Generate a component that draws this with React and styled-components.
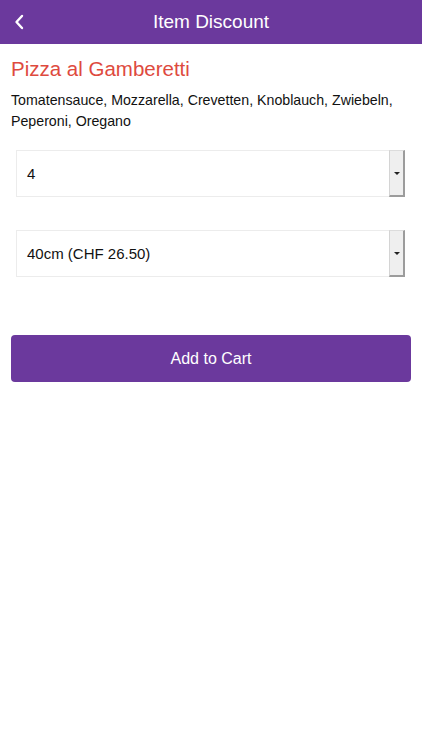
import styled, { createGlobalStyle } from "styled-components";

const GlobalStyle = createGlobalStyle`
  html, body {
    margin: 0;
    padding: 0;
    background: #ffffff;
    font-family: "Liberation Sans", Arial, sans-serif;
  }
`;

const PURPLE = "#6b399d";

const Page = styled.div`
  width: 422px;
  min-height: 750px;
  background: #ffffff;
`;

const TopBar = styled.header`
  height: 44px;
  background: ${PURPLE};
  display: flex;
  align-items: center;
  justify-content: center;
  position: relative;
`;

const BackButton = styled.button`
  position: absolute;
  left: 12px;
  top: 13px;
  width: 14px;
  height: 18px;
  padding: 0;
  border: 0;
  background: transparent;
  display: flex;
  align-items: center;
  justify-content: center;
`;

const BarTitle = styled.h1`
  margin: 0;
  color: #ffffff;
  font-size: 19px;
  font-weight: normal;
`;

const Content = styled.main`
  padding: 12px 11px 0;
  display: flex;
  flex-direction: column;
`;

const ItemName = styled.h2`
  margin: 0;
  color: #de4a3e;
  font-size: 20.5px;
  line-height: 26px;
  font-weight: normal;
`;

const Ingredients = styled.p`
  margin: 8px 0 0;
  color: #111111;
  font-size: 14.2px;
  line-height: 21px;
`;

const SelectRow = styled.div`
  display: flex;
  height: 47px;
  margin: ${(p) => p.$top}px 6px 0 5px;
`;

const SelectValue = styled.div`
  flex: 1;
  display: flex;
  align-items: center;
  padding-left: 10px;
  border: 1px solid #ececec;
  border-right: 0;
  font-size: 15px;
  color: #111111;
`;

const ArrowButton = styled.div`
  width: 13px;
  display: flex;
  align-items: center;
  justify-content: center;
  background: #efefef;
  border-top: 1px solid #dcdcdc;
  border-left: 1px solid #d4d4d4;
  border-right: 2px solid #9c9c9c;
  border-bottom: 2px solid #9c9c9c;
`;

const Caret = styled.span`
  width: 0;
  height: 0;
  border-left: 3px solid transparent;
  border-right: 3px solid transparent;
  border-top: 3px solid #222222;
`;

const CartButton = styled.button`
  margin-top: 58px;
  height: 47px;
  border: 0;
  border-radius: 4px;
  background: ${PURPLE};
  color: #ffffff;
  font-family: inherit;
  font-size: 16px;
`;

const Select = ({ value, top }) => (
  <SelectRow $top={top}>
    <SelectValue>{value}</SelectValue>
    <ArrowButton>
      <Caret />
    </ArrowButton>
  </SelectRow>
);

const App = () => (
  <Page>
    <GlobalStyle />
    <TopBar>
      <BackButton aria-label="Back">
        <svg width="10" height="16" viewBox="0 0 10 16">
          <path
            d="M8 2 L2.5 8 L8 14"
            fill="none"
            stroke="#ffffff"
            strokeWidth="2.4"
            strokeLinecap="round"
            strokeLinejoin="round"
          />
        </svg>
      </BackButton>
      <BarTitle>Item Discount</BarTitle>
    </TopBar>
    <Content>
      <ItemName>Pizza al Gamberetti</ItemName>
      <Ingredients>
        Tomatensauce, Mozzarella, Crevetten, Knoblauch, Zwiebeln, Peperoni,
        Oregano
      </Ingredients>
      <Select value="4" top={18} />
      <Select value="40cm (CHF 26.50)" top={33} />
      <CartButton>Add to Cart</CartButton>
    </Content>
  </Page>
);

export default App;
